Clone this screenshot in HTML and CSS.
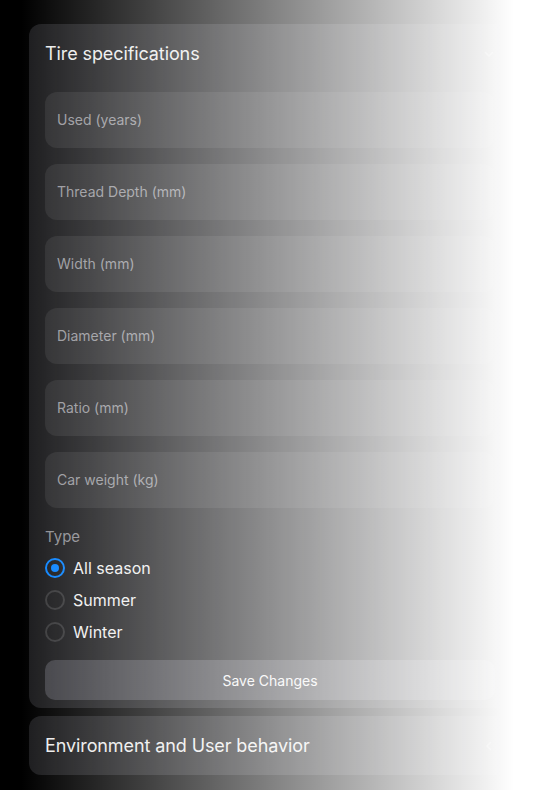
FILE: index.html
```html
<!DOCTYPE html>
<html lang="en">
<head>
<meta charset="utf-8">
<title>Tire specifications</title>
<link rel="stylesheet" href="styles.css">
</head>
<body>
<main class="page">
  <section class="card">
    <header class="card-header">
      <h2 class="card-title">Tire specifications</h2>
      <svg class="chevron" width="12" height="12" viewBox="0 0 12 12" aria-hidden="true"><path d="M2.5 4.5 6 8l3.5-3.5" fill="none" stroke="#fff" stroke-width="1.5" stroke-linecap="round" stroke-linejoin="round"/></svg>
    </header>
    <form class="card-body">
      <div class="fields">
        <input class="field" type="text" placeholder="Used (years)">
        <input class="field" type="text" placeholder="Thread Depth (mm)">
        <input class="field" type="text" placeholder="Width (mm)">
        <input class="field" type="text" placeholder="Diameter (mm)">
        <input class="field" type="text" placeholder="Ratio (mm)">
        <input class="field" type="text" placeholder="Car weight (kg)">
      </div>
      <fieldset class="type-group">
        <legend class="type-label">Type</legend>
        <label class="radio-row"><span class="radio radio-checked"></span><span>All season</span></label>
        <label class="radio-row"><span class="radio"></span><span>Summer</span></label>
        <label class="radio-row"><span class="radio"></span><span>Winter</span></label>
      </fieldset>
      <button class="save-btn" type="button">Save Changes</button>
    </form>
  </section>
  <section class="card card-collapsed">
    <header class="card-header">
      <h2 class="card-title">Environment and User behavior</h2>
      <svg class="chevron" width="12" height="12" viewBox="0 0 12 12" aria-hidden="true"><path d="M7.5 2.5 4 6l3.5 3.5" fill="none" stroke="#fff" stroke-width="1.5" stroke-linecap="round" stroke-linejoin="round"/></svg>
    </header>
  </section>
</main>
<div class="fade-overlay"></div>
</body>
</html>
```

FILE: styles.css
```css
* { box-sizing: border-box; }

html, body {
  margin: 0;
  padding: 0;
  background: #000;
  height: 100%;
}

body {
  font-family: Inter, "Noto Sans", "Liberation Sans", sans-serif;
  color: #f2f2f2;
}

.page {
  padding: 24px 24px 0 29px;
  display: flex;
  flex-direction: column;
  gap: 8px;
}

.card {
  background: #1c1c1e;
  border-radius: 12px;
  padding: 0 16px 8px;
}

.card-collapsed {
  padding-bottom: 0;
}

.card-header {
  height: 59px;
  display: flex;
  align-items: center;
  justify-content: space-between;
}

.card-title {
  margin: 0;
  font-size: 18px;
  font-weight: 400;
  color: #ececec;
  letter-spacing: -0.1px;
}

.chevron {
  opacity: 0.35;
}

.card-body {
  margin: 9px 0 0;
  display: flex;
  flex-direction: column;
}

.fields {
  display: flex;
  flex-direction: column;
  gap: 16px;
}

.field {
  height: 56px;
  border: none;
  border-radius: 12px;
  background: #2c2c2e;
  padding: 0 12px 1px;
  font-family: inherit;
  font-size: 14px;
  color: #eee;
  outline: none;
}

.field::placeholder {
  color: #98989d;
}

.type-group {
  border: none;
  margin: 17px 0 0;
  padding: 0;
  display: flex;
  flex-direction: column;
}

.type-label {
  padding: 0;
  font-size: 15px;
  color: #8e8e93;
  height: 24px;
  line-height: 24px;
  margin-bottom: 3px;
}

.radio-row {
  display: flex;
  align-items: center;
  gap: 8px;
  height: 32px;
  font-size: 16px;
  font-weight: 400;
  color: #efefef;
}

.radio {
  width: 20px;
  height: 20px;
  border-radius: 50%;
  border: 2px solid #3a3a3c;
  display: flex;
  align-items: center;
  justify-content: center;
}

.radio-checked {
  border-color: #0a84ff;
}

.radio-checked::after {
  content: "";
  width: 8px;
  height: 8px;
  border-radius: 50%;
  background: #0a84ff;
}

.save-btn {
  margin-top: 12px;
  height: 40px;
  border: none;
  border-radius: 10px;
  background: #414146;
  color: #f4f4f4;
  font-family: inherit;
  font-size: 14px;
  font-weight: 400;
}

.fade-overlay {
  position: fixed;
  inset: 0;
  pointer-events: none;
  background: linear-gradient(90deg, rgba(255,255,255,0) 4%, #fff 96%);
}
```
